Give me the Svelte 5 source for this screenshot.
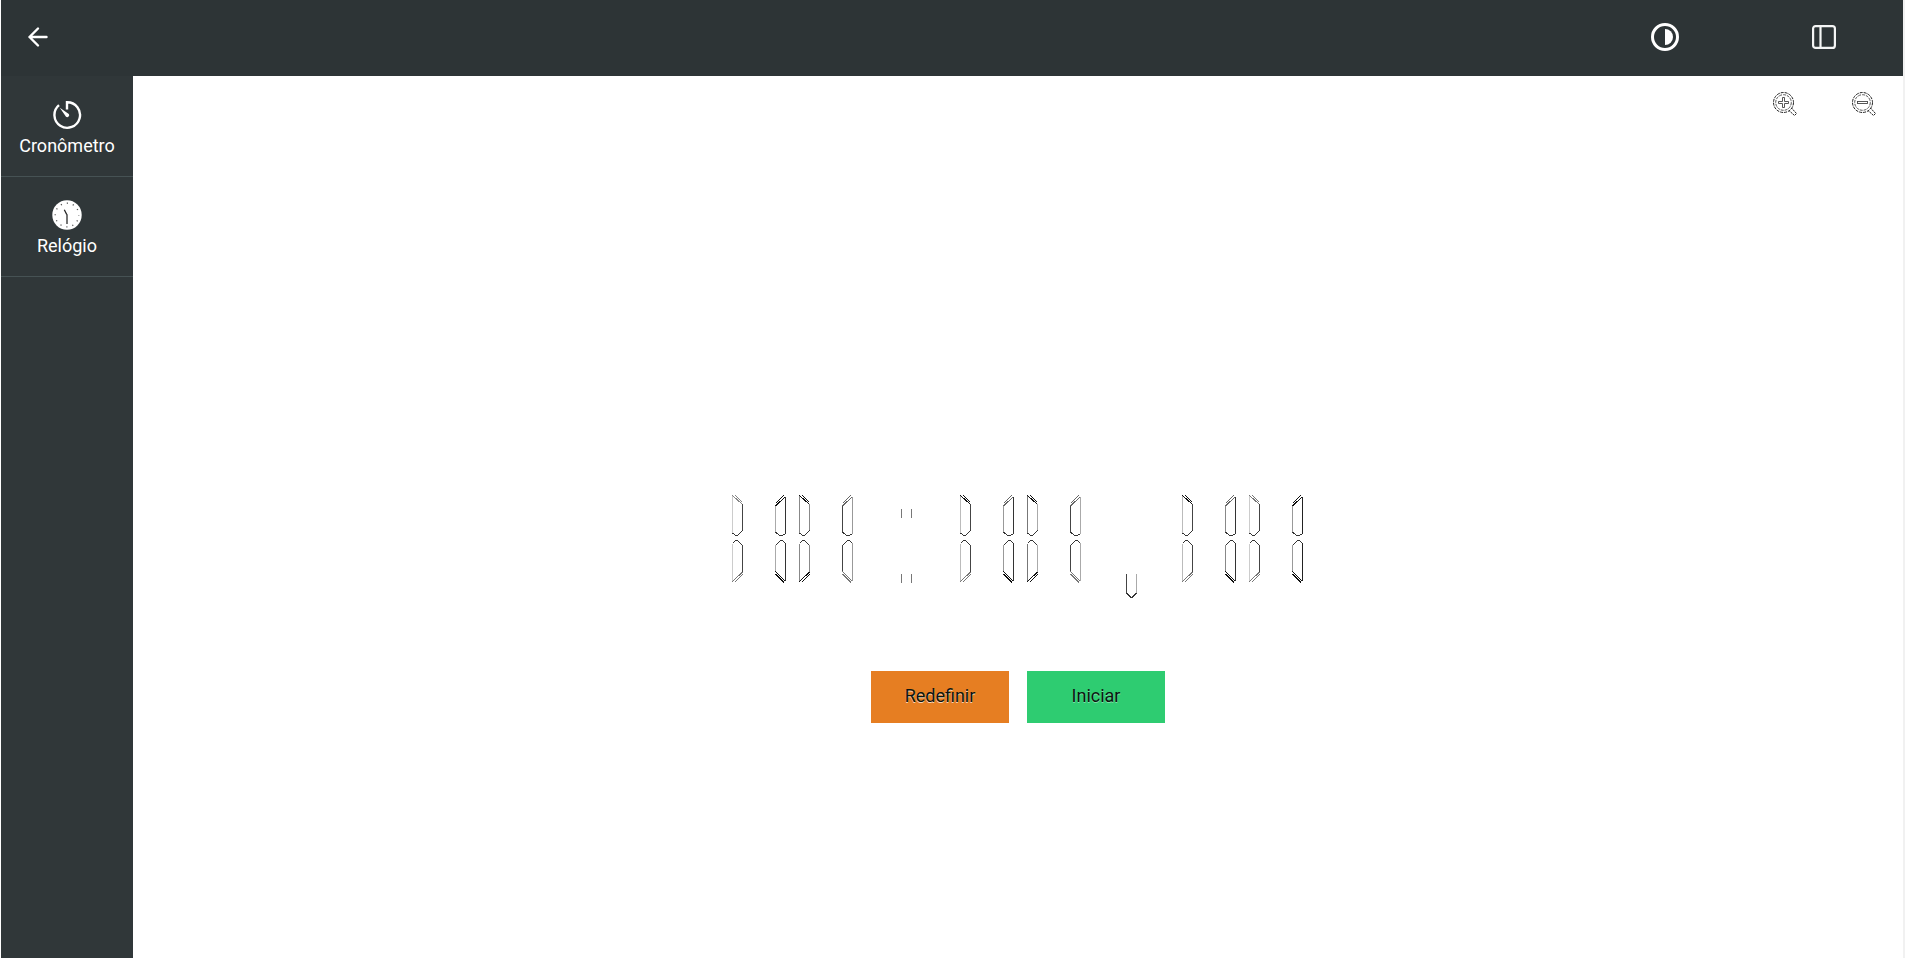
<script>
  let running = $state(false);
  let elapsed = $state(0);
  let scale = $state(1);
  let dark = $state(false);
  let sidebarOpen = $state(true);
  let timer;

  const two = (n) => String(n).padStart(2, '0');
  const time = $derived(
    `${two(Math.floor(elapsed / 6000))}:${two(Math.floor(elapsed / 100) % 60)},${two(elapsed % 100)}`
  );

  // Edge shades for every digit: left/right edge of the left bars, then of the right bars,
  // then the four bevels (upper left, upper right, lower left, lower right).
  const shades = [
    { l: ['#ccc', '#444'], r: ['#aaa', '#333'], b: ['#888', '#111', '#777', '#111'] },
    { l: ['#888', '#888'], r: ['#444', '#999'], b: ['#111', '#666', '#111', '#777'] },
    { l: ['#bbb', '#444'], r: ['#999', '#333'], b: ['#111', '#666', '#777', '#111'] },
    { l: ['#777', '#aaa'], r: ['#444', '#aaa'], b: ['#111', '#666', '#111', '#777'] },
    { l: ['#bbb', '#444'], r: ['#888', '#333'], b: ['#111', '#666', '#777', '#111'] },
    { l: ['#ccc', '#444'], r: ['#999', '#222'], b: ['#777', '#111', '#777', '#111'] }
  ];

  // Position of every character among the digits, so that it can find its shades.
  const cells = $derived(
    [...time].map((ch, i) => ({ ch, shade: shades[i - Math.floor(i / 3)] }))
  );

  // Upright bars of every digit.
  const lit = {
    0: ['ul', 'ur', 'll', 'lr'],
    1: ['ur', 'lr'],
    2: ['ur', 'll'],
    3: ['ur', 'lr'],
    4: ['ul', 'ur', 'lr'],
    5: ['ul', 'lr'],
    6: ['ul', 'll', 'lr'],
    7: ['ur', 'lr'],
    8: ['ul', 'ur', 'll', 'lr'],
    9: ['ul', 'ur', 'lr']
  };
  const has = (ch, bar) => lit[ch].includes(bar);

  function toggle() {
    running = !running;
    clearInterval(timer);
    if (running) timer = setInterval(() => elapsed++, 10);
  }
  function reset() {
    clearInterval(timer);
    running = false;
    elapsed = 0;
  }
</script>

<div class="app" class:dark>
  <header>
    <button class="back" aria-label="Voltar">
      <svg width="24" height="24" viewBox="0 0 24 24" fill="none" stroke="#fff" stroke-width="2.400" stroke-linecap="round" stroke-linejoin="round">
        <path d="M20.500 12H3.500M12 3.500L3.500 12l8.500 8.500" />
      </svg>
    </button>
    <div class="actions">
      <button aria-label="Contraste" onclick={() => (dark = !dark)}>
        <svg width="30" height="30" viewBox="0 0 30 30">
          <circle cx="15" cy="15" r="12.500" fill="none" stroke="#fff" stroke-width="3" />
          <path d="M15 7a8 8 0 0 1 0 16z" fill="#fff" />
        </svg>
      </button>
      <button aria-label="Painel lateral" onclick={() => (sidebarOpen = !sidebarOpen)}>
        <svg width="24" height="24" viewBox="0 0 24 24" fill="none" stroke="#f4f5f5" stroke-width="2.200">
          <rect x="1.100" y="1.100" width="21.800" height="21.800" rx="2.500" />
          <path d="M8.500 1v22" />
        </svg>
      </button>
    </div>
  </header>

  <div class="body">
    {#if sidebarOpen}
      <nav>
        <a href="#cronometro">
          <svg width="30" height="30" viewBox="0 0 30 30" fill="none" stroke="#fff" stroke-width="2.400">
            <path d="M7 5.200A12.800 12.800 0 1 0 15 2.200V9.500" />
            <path d="M7.800 7.800l9 6.200a2 2 0 0 1-2.800 2.800z" fill="#fff" stroke="none" />
          </svg>
          <span>Cronômetro</span>
        </a>
        <a href="#relogio">
          <svg width="30" height="30" viewBox="0 0 30 30">
            <circle cx="15" cy="15" r="14.700" fill="#fff" />
            <circle cx="15" cy="15" r="11.800" fill="none" stroke="#555" stroke-width="1.300" stroke-dasharray="1.200 4.979" stroke-dashoffset="0.600" />
            <path d="M12.300 9.800L15 15" fill="none" stroke="#222" stroke-width="1.300" />
            <path d="M15 14.500V24" fill="none" stroke="#666" stroke-width="1.800" />
          </svg>
          <span>Relógio</span>
        </a>
      </nav>
    {/if}

    <main>
      <div class="zoom">
        <button aria-label="Aumentar" onclick={() => (scale += 0.1)}>
          <svg width="24" height="24" viewBox="0 0 24 24" fill="none">
            <circle cx="10.500" cy="10.500" r="10" stroke="#222" stroke-dasharray="3 1" />
            <circle cx="10.500" cy="10.500" r="7.800" stroke="#444" stroke-width="0.900" stroke-dasharray="3 1" />
            <path d="M9.500 5.500h2v4h4v2h-4v4h-2v-4h-4v-2h4z" stroke="#444" stroke-width="0.900" />
            <path d="M18.500 16l5 5.500-2 2-5.500-5" stroke="#222" stroke-dasharray="2 0.700" />
          </svg>
        </button>
        <button aria-label="Diminuir" onclick={() => (scale -= 0.1)}>
          <svg width="24" height="24" viewBox="0 0 24 24" fill="none">
            <circle cx="10.500" cy="10.500" r="10" stroke="#222" stroke-dasharray="3 1" />
            <circle cx="10.500" cy="10.500" r="7.800" stroke="#444" stroke-width="0.900" stroke-dasharray="3 1" />
            <rect x="5.500" y="9.500" width="10" height="2" stroke="#444" stroke-width="0.900" />
            <path d="M18.500 16l5 5.500-2 2-5.500-5" stroke="#222" stroke-dasharray="2 0.700" />
          </svg>
        </button>
      </div>

      <section class="stage">
        <div class="display" role="timer" aria-label={time} style:zoom={scale}>
          {#each cells as { ch, shade }}
            {#if ch === ':'}
              <svg width="94" height="103" viewBox="0 0 94 103" stroke="#777">
                <path d="M41.500 14v9M51.500 14v9M41.500 79v9M51.500 79v9" />
              </svg>
            {:else if ch === ','}
              <svg width="88" height="103" viewBox="0 0 88 103" fill="none">
                <path d="M38.500 79v19" stroke="#444" />
                <path d="M48.500 79v19" stroke="#aaa" />
                <path d="M38.500 98l4 4h2l4-4" stroke="#333" />
              </svg>
            {:else}
              <svg width="67" height="103" viewBox="-6 0 67 103" fill="none">
                {#if has(ch, 'ul')}
                  <path d="M.5 1v37" stroke={shade.l[0]} />
                  <path d="M10.500 9v27" stroke={shade.l[1]} />
                  <path d="M.5 38l3 2.500h2l5-5" stroke="#333" />
                  <path d="M.5.5L10.500 9.500M3.500.5l7 7" stroke={shade.b[0]} />
                {/if}
                {#if has(ch, 'ur')}
                  <path d="M43.500 10v27" stroke={shade.r[0]} />
                  <path d="M53.500 2v37" stroke={shade.r[1]} />
                  <path d="M43.500 37l4 3.500h3l3-2" stroke="#333" />
                  <path d="M43.500 11l9.500-9M43.500 8.500L51.500.5" stroke={shade.b[1]} />
                {/if}
                {#if has(ch, 'll')}
                  <path d="M.5 49v38" stroke={shade.l[0]} />
                  <path d="M10.500 50v27" stroke={shade.l[1]} />
                  <path d="M.5 48.500l3-3h2l5 5" stroke="#333" />
                  <path d="M.5 86.500l10-9.500M2.500 87.500l8-8" stroke={shade.b[2]} />
                {/if}
                {#if has(ch, 'lr')}
                  <path d="M43.500 50v27" stroke={shade.r[0]} />
                  <path d="M53.500 48v38" stroke={shade.r[1]} />
                  <path d="M43.500 50.500l5-5h2l3 3" stroke="#333" />
                  <path d="M43.500 76.500l9.500 9.500M43.500 79l8.500 8.500" stroke={shade.b[3]} />
                {/if}
              </svg>
            {/if}
          {/each}
        </div>
        <div class="controls">
          <button class="reset" onclick={reset}>Redefinir</button>
          <button class="start" onclick={toggle}>{running ? 'Pausar' : 'Iniciar'}</button>
        </div>
      </section>
    </main>
  </div>
</div>

<style>
  :global(body) {
    margin: 0;
    background: #fff;
  }
  .app {
    display: flex;
    flex-direction: column;
    box-sizing: border-box;
    min-height: 100vh;
    border-left: 1px solid #fff;
    border-right: 2px solid #f1f1f1;
    font-family: Roboto, "Liberation Sans", sans-serif;
    font-size: 18px;
  }
  button {
    display: flex;
    align-items: center;
    justify-content: center;
    margin: 0;
    padding: 0;
    border: 0;
    background: none;
    font: inherit;
    cursor: pointer;
  }
  svg {
    display: block;
    flex: none;
  }
  header {
    display: flex;
    justify-content: space-between;
    height: 76px;
    background: #2d3436;
  }
  .back {
    width: 74px;
    padding-bottom: 2px;
  }
  .actions {
    display: flex;
    padding-bottom: 2px;
  }
  .actions button {
    width: 159px;
  }
  .body {
    display: flex;
    flex: 1;
  }
  nav {
    width: 132px;
    padding-top: 1px;
    background: #303739;
  }
  nav a {
    display: flex;
    flex-direction: column;
    align-items: center;
    gap: 4px;
    box-sizing: border-box;
    height: 100px;
    padding-top: 23px;
    border-bottom: 1px solid #465254;
    color: #fff;
    line-height: 24px;
    text-decoration: none;
  }
  main {
    display: flex;
    flex: 1;
    flex-direction: column;
    background: #fff;
  }
  .dark main {
    background: #dfe6e9;
  }
  .zoom {
    display: flex;
    justify-content: flex-end;
    height: 55px;
  }
  .zoom button {
    width: 79px;
  }
  .stage {
    display: flex;
    flex: 1;
    flex-direction: column;
    align-items: center;
    justify-content: center;
    gap: 73px;
    padding-top: 128px;
  }
  .display {
    display: flex;
  }
  .display svg {
    shape-rendering: crispEdges;
  }
  .controls {
    display: flex;
    gap: 18px;
  }
  .controls button {
    width: 138px;
    height: 52px;
    padding-bottom: 2px;
    color: #0c1410;
  }
  .controls .reset {
    background: #e67e22;
    text-shadow: 0 1px 0 rgba(255, 255, 255, 0.7);
  }
  .controls .start {
    background: #2ecc71;
    text-shadow: 0 1px 0 rgba(255, 255, 255, 0.4);
  }
</style>
